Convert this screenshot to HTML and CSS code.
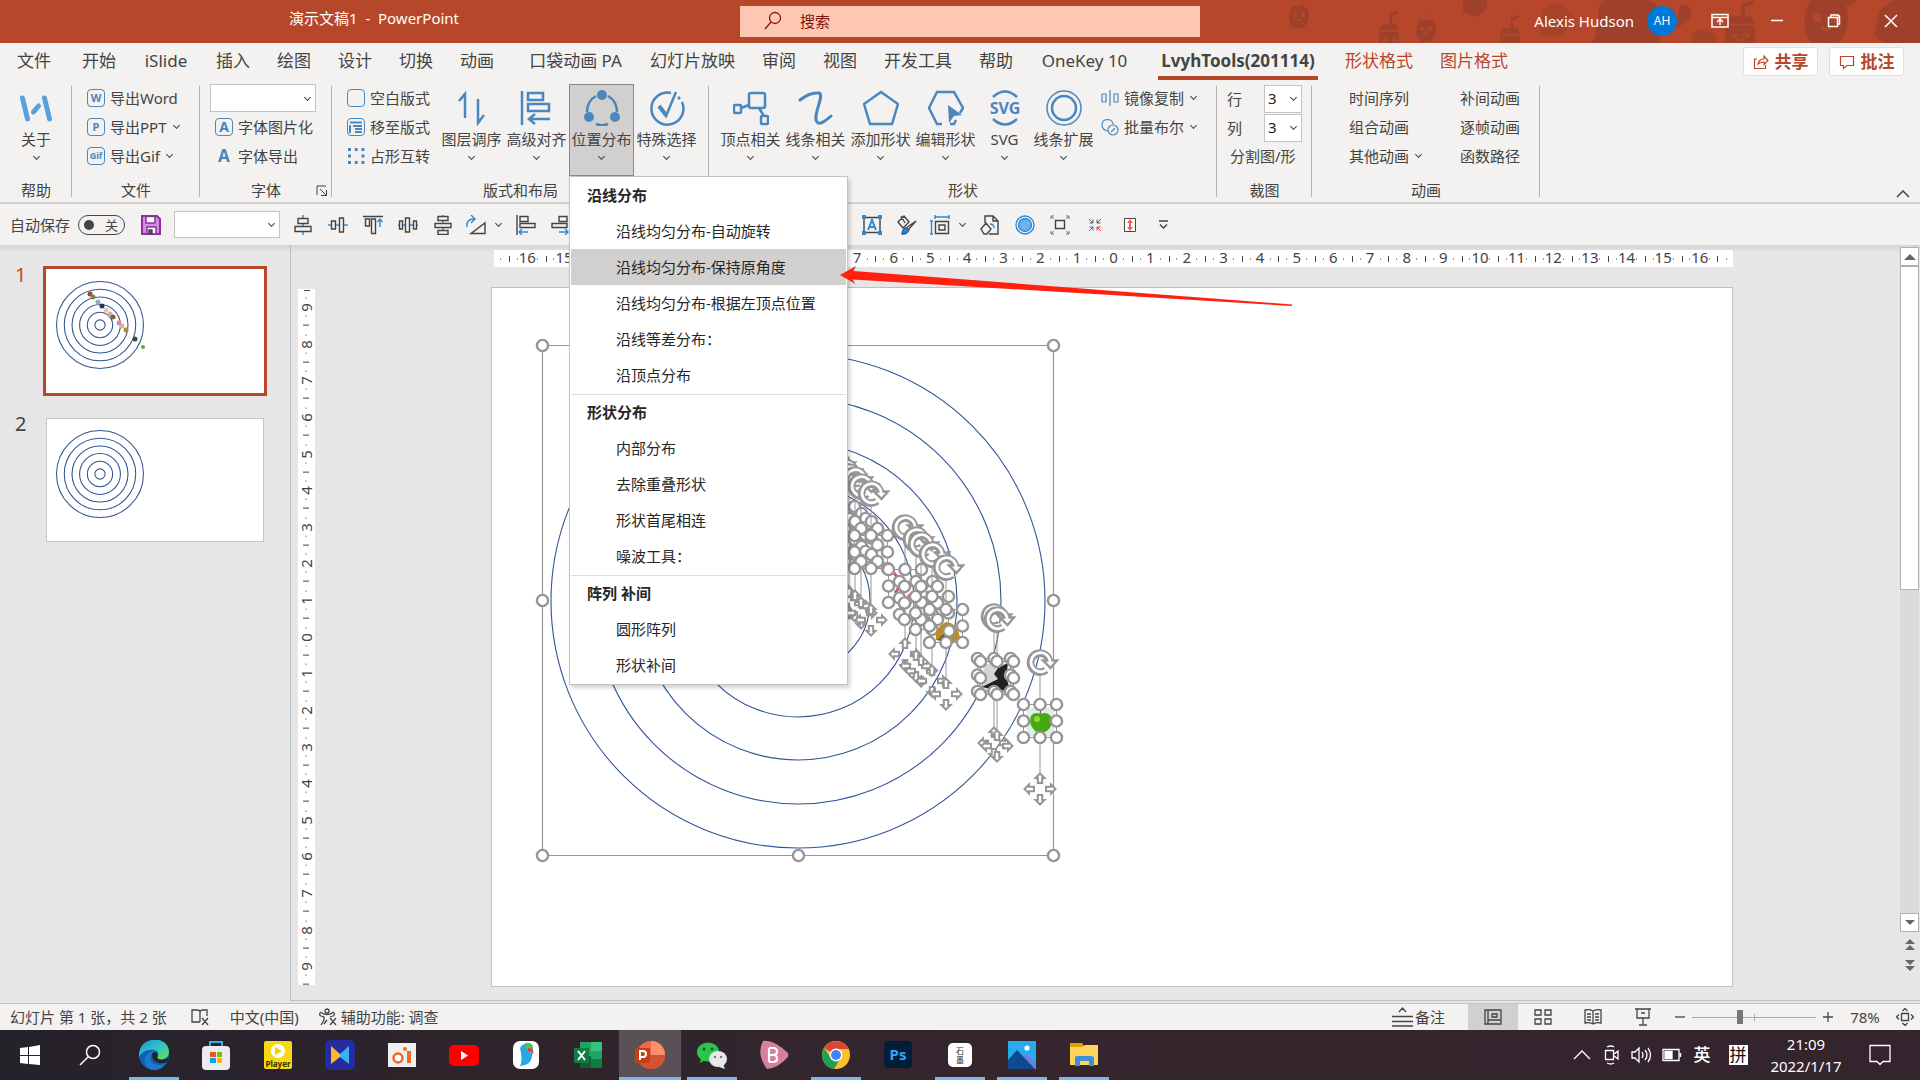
FILE: index.html
```html
<!DOCTYPE html>
<html lang="zh-CN">
<head>
<meta charset="utf-8">
<title>演示文稿1 - PowerPoint</title>
<link rel="stylesheet" href="styles.css">
</head>
<body>
<svg class="defs" aria-hidden="true">
  <defs>
    <symbol id="rings" viewBox="0 0 500 500"><g fill="none"><circle cx="250" cy="250" r="247"/><circle cx="250" cy="250" r="203"/><circle cx="250" cy="250" r="159"/><circle cx="250" cy="250" r="116"/><circle cx="250" cy="250" r="72"/><circle cx="250" cy="250" r="29"/></g></symbol>
    <g id="h"><circle r="5.6" fill="#fff" stroke="#969696" stroke-width="2.4"/></g>
    <g id="handles"><path d="M-16.5-16.5h33v33h-33z" fill="none" stroke="#969696"/><use href="#h" x="-16.5" y="-16.5"/><use href="#h" y="-16.5"/><use href="#h" x="16.5" y="-16.5"/><use href="#h" x="-16.5"/><use href="#h" x="16.5"/><use href="#h" x="-16.5" y="16.5"/><use href="#h" y="16.5"/><use href="#h" x="16.5" y="16.5"/></g>
    <g id="rot"><path d="M6 8A9.5 9.5 0 1 1 9.5 0" fill="none" stroke="#969696" stroke-width="7.6"/><path d="M3-1.500H17L10.500 6z" fill="#fff" stroke="#969696" stroke-width="2.400"/><path d="M6 8A9.500 9.500 0 1 1 10 1" fill="none" stroke="#fff" stroke-width="2.800"/></g>
    <path id="arw" d="M0-15.500L4.500-11H2.200V-6H-2.200V-11H-4.500z"/>
    <g id="move" fill="#fff" stroke="#969696" stroke-width="2"><use href="#arw"/><use href="#arw" transform="rotate(90)"/><use href="#arw" transform="rotate(180)"/><use href="#arw" transform="rotate(270)"/></g>
    <g id="sel"><path d="M0-46V-16M0 16V54" stroke="#969696"/><use href="#move" y="68"/><use href="#rot" y="-59"/><use href="#handles"/></g>
    <g id="fruit"><path d="M-9-5Q-8-13 0-11Q8-13 10-4Q10 8 3 11H-5Q-12 6-9-5z"/><circle cx="-4" cy="-2" r="2" fill="#b4472a"/><circle cx="4" cy="-2" r="2" fill="#b4472a"/><path d="M-2 2q2 3 4 0M0-11q0-7 4-9" fill="none" stroke="#b4472a" stroke-width="1.500"/></g>
    <g id="juice"><path d="M-10-8L-6-14H7L10-8V14H-10z"/><path d="M2-14V-23L9-26" fill="none" stroke="#98402b" stroke-width="2.500"/><path d="M-10-7H10" stroke="#b4472a" stroke-width="1.500"/><circle cx="-4" cy="2" r="2" fill="#b4472a"/><circle cx="5" cy="2" r="2" fill="#b4472a"/><path d="M-2 5q2 3 4 0" fill="none" stroke="#b4472a" stroke-width="1.500"/></g>
  </defs>
</svg>

<header class="titlebar">
  <svg class="doodles" viewBox="0 0 640 43" fill="#9f412a" aria-hidden="true"><use href="#fruit" x="19" y="17"/><path d="M19 8q3-8 5-2"/><use href="#juice" x="109" y="38"/><use href="#fruit" x="146" y="31"/><path d="M183-2h24v10l-10 9-14-5z"/><use href="#juice" x="230" y="42"/><path d="M264 9q10-10 24 0q8 5 2 14q-4 14-22 14q-12-4-8-14z" opacity=".7"/><path d="M318 10q2-14 30-12q38 0 32 22q-6 4 2 24h-70q8-20 6-34z"/><path d="M400 5q14-2 10 14l-14 10z"/><path d="M413 33q12-8 20 0q8 10-2 12h-22z" opacity=".8"/><use href="#juice" transform="translate(460 33) scale(1.500 1.200)"/><use href="#fruit" transform="translate(546 22) scale(2.200)"/><path d="M552 2q6-10 28-6q-8 14-28 10z"/><path d="M600 10l14-10h30v43h-40l-10-8z"/></svg>
  <div class="doc">演示文稿1&nbsp; -&nbsp; PowerPoint</div>
  <label class="search"><svg width="20" height="20" viewBox="0 0 20 20" fill="none" stroke="#8b1a10" stroke-width="1.3"><circle cx="12" cy="7" r="5.500"/><path d="M8 11L2 18"/></svg><input type="text" placeholder="搜索" aria-label="搜索"></label>
  <div class="account">
    <span class="user">Alexis Hudson</span><span class="avatar">AH</span>
    <button class="win" aria-label="功能区显示选项"><svg width="18" height="18" viewBox="0 0 18 18"><path d="M1 2.500h16v12.500H1zM1 5.500h16M9 13V7.500M6 10l3-3 3 3"/></svg></button>
    <button class="win" aria-label="最小化"><svg width="18" height="18" viewBox="0 0 18 18"><path d="M3 8.500h12"/></svg></button>
    <button class="win" aria-label="还原"><svg width="18" height="18" viewBox="0 0 18 18"><path d="M3.500 5.500h9v9h-9zM6 5V3h6q2.500 0 2.500 2.500V12h-2"/></svg></button>
    <button class="win" aria-label="关闭"><svg width="18" height="18" viewBox="0 0 18 18"><path d="M3 3l12 12M15 3L3 15"/></svg></button>
  </div>
</header>

<nav class="tabs">
  <button class="tab file">文件</button><button class="tab">开始</button><button class="tab latin">iSlide</button><button class="tab">插入</button><button class="tab">绘图</button><button class="tab">设计</button><button class="tab">切换</button><button class="tab">动画</button><button class="tab wide">口袋动画 PA</button><button class="tab">幻灯片放映</button><button class="tab">审阅</button><button class="tab">视图</button><button class="tab">开发工具</button><button class="tab">帮助</button><button class="tab onekey">OneKey 10</button><button class="tab on"><span>LvyhTools(201114)</span></button><button class="tab ctx">形状格式</button><button class="tab ctx">图片格式</button>
  <div class="share">
    <button><svg width="16" height="16" viewBox="0 0 16 16"><path d="M4 5H1.500v9.500h11V11M5 10q1-5 6-5V2l4 4.500-4 4V8Q7 8 5 10z"/></svg>共享</button>
    <button><svg width="16" height="16" viewBox="0 0 16 16"><path d="M1.500 2.500h13v9H8l-3.500 3v-3h-3z"/></svg>批注</button>
  </div>
</nav>

<section class="ribbon">
  <div class="group g-help">
    <div class="body"><button class="big"><svg width="36" height="36" viewBox="0 0 36 36" fill="none" stroke="#5aa0dc" stroke-width="5" stroke-linecap="round"><path d="M4.500 8l5 21M26.500 8l5 21M15.500 22l5-6"/></svg>关于<i class="chev"></i></button></div>
    <h2>帮助</h2>
  </div>
  <div class="group g-file">
    <div class="body"><div class="col">
      <button class="small"><span class="badge">W</span>导出Word</button>
      <button class="small"><span class="badge">P</span>导出PPT<i class="chev"></i></button>
      <button class="small"><span class="badge thin">Gif</span>导出Gif<i class="chev"></i></button>
    </div></div>
    <h2>文件</h2>
  </div>
  <div class="group g-font">
    <div class="body"><div class="col">
      <div class="combo font"><select aria-label="字体"><option></option></select><i class="chev"></i></div>
      <button class="small in"><span class="badge a">A</span>字体图片化</button>
      <button class="small in"><span class="badge a bare">A</span>字体导出</button>
    </div></div>
    <h2>字体</h2>
    <svg class="launch" width="12" height="12" viewBox="0 0 12 12"><path d="M1 10V1h9M4 4l6 6M10.500 5v5.500H5"/></svg>
  </div>
  <div class="group g-layout">
    <div class="body"><div class="col">
      <button class="small"><span class="badge"></span>空白版式</button>
      <button class="small"><span class="badge"><svg width="14" height="14" viewBox="0 0 14 14" stroke="#4a87c0" stroke-width="2"><path d="M1 2.500h12M1 5v8M4 6h9M6 9h7M6 12h7" fill="none"/></svg></span>移至版式</button>
      <button class="small"><svg class="dots" width="18" height="18" viewBox="0 0 18 18" fill="none" stroke="#4a87c0" stroke-width="3" stroke-dasharray="3 3.700"><path d="M1 2.500h17M1 9h3M14.500 9h3M1 15.500h17"/></svg>占形互转</button>
    </div>
    <div class="bigs">
      <button class="big"><svg width="36" height="36" viewBox="0 0 36 36" class="ic"><path d="M11 28V4L5 11M24 9v24l6-8"/></svg>图层调序<i class="chev"></i></button>
      <button class="big"><svg width="36" height="36" viewBox="0 0 36 36" class="ic"><path d="M3 1v34M9 3h15v7H9zM9 14h21v7H9zM31 29H10M16 24l-6 5 6 5"/></svg>高级对齐<i class="chev"></i></button>
      <button class="big active"><svg width="36" height="36" viewBox="0 0 36 36" class="ic"><path d="M12 6Q3 11 3 22M24 6q9 5 9 16M12 34q6 2.500 12 0"/><g fill="#4a87c0" stroke="none"><circle cx="18" cy="5" r="5"/><circle cx="5" cy="27" r="5"/><circle cx="31" cy="27" r="5"/></g></svg>位置分布<i class="chev"></i></button>
      <button class="big"><svg width="36" height="36" viewBox="0 0 36 36" class="ic"><path d="M22 3A16 16 0 1 0 33 12M31 9l-2-2M11 17l6 9L27 2" stroke-width="2.500"/><path d="M10 16l7 9" stroke-width="4"/></svg>特殊选择<i class="chev"></i></button>
    </div></div>
    <h2>版式和布局</h2>
  </div>
  <div class="group g-shape">
    <div class="body"><div class="bigs">
      <button class="big"><svg width="36" height="36" viewBox="0 0 36 36" class="ic"><rect x="16" y="3" width="16" height="15" rx="2"/><rect x="1" y="15" width="7" height="8" rx="1"/><rect x="28" y="26" width="7" height="8" rx="1"/><path d="M8 18l8-3M26 18l5 8"/></svg>顶点相关<i class="chev"></i></button>
      <button class="big"><svg width="36" height="36" viewBox="0 0 36 36" class="ic"><path d="M2 10Q12 2 21 3c6 2-7 23-2 29q3 4 14-6" stroke-width="3" stroke-linecap="round"/></svg>线条相关<i class="chev"></i></button>
      <button class="big"><svg width="36" height="36" viewBox="0 0 36 36" class="ic"><path d="M18 2l17 12-6 20H7L1 14z"/></svg>添加形状<i class="chev"></i></button>
      <button class="big"><svg width="36" height="36" viewBox="0 0 36 36" class="ic"><path d="M14 34H9L1 18 9 2h17l9 16-3 5M28 30l-2 4h-4"/><path d="M20 15l14 10-8 1-5 7z" fill="#4a87c0" stroke="none"/></svg>编辑形状<i class="chev"></i></button>
      <button class="big narrow"><svg width="36" height="36" viewBox="0 0 36 36" class="ic"><path d="M6 7q12-11 24 0M6 29q12 11 24 0"/><text x="18" y="24" text-anchor="middle" fill="#4a87c0" stroke="none">SVG</text></svg>SVG<i class="chev"></i></button>
      <button class="big"><svg width="38" height="36" viewBox="0 0 38 36" class="ic"><circle cx="19" cy="18" r="17" stroke-width="1.500"/><circle cx="19" cy="18" r="12"/></svg>线条扩展<i class="chev"></i></button>
    </div>
    <div class="col">
      <button class="small"><svg width="18" height="18" viewBox="0 0 18 18" class="ic s"><path d="M1 5h4v8H1zM13 5h4v8h-4zM9 1v16"/></svg>镜像复制<i class="chev"></i></button>
      <button class="small"><svg width="18" height="18" viewBox="0 0 18 18" class="ic s"><path d="M7 13q-6-1-6-6t5-5.500q6 0 6 5"/><circle cx="12" cy="12" r="5"/><path d="M10 14l4-4"/></svg>批量布尔<i class="chev"></i></button>
    </div></div>
    <h2>形状</h2>
  </div>
  <div class="group g-crop">
    <div class="body"><div class="col">
      <label class="field">行<span class="combo num"><select><option>3</option></select><i class="chev"></i></span></label>
      <label class="field">列<span class="combo num"><select><option>3</option></select><i class="chev"></i></span></label>
      <button class="small">分割图/形</button>
    </div></div>
    <h2>裁图</h2>
  </div>
  <div class="group g-anim">
    <div class="body">
      <div class="col"><button class="small">时间序列</button><button class="small">组合动画</button><button class="small">其他动画<i class="chev"></i></button></div>
      <div class="col"><button class="small">补间动画</button><button class="small">逐帧动画</button><button class="small">函数路径</button></div>
    </div>
    <h2>动画</h2>
  </div>
  <button class="collapse" aria-label="折叠功能区"><svg width="14" height="8" viewBox="0 0 14 8"><path d="M1 7l6-6 6 6"/></svg></button>

  <div class="menu" role="menu">
    <h3>沿线分布</h3>
    <button role="menuitem">沿线均匀分布-自动旋转</button>
    <button role="menuitem" class="hover">沿线均匀分布-保持原角度</button>
    <button role="menuitem">沿线均匀分布-根据左顶点位置</button>
    <button role="menuitem">沿线等差分布：</button>
    <button role="menuitem">沿顶点分布</button>
    <hr>
    <h3>形状分布</h3>
    <button role="menuitem">内部分布</button>
    <button role="menuitem">去除重叠形状</button>
    <button role="menuitem">形状首尾相连</button>
    <button role="menuitem">噪波工具：</button>
    <hr>
    <h3>阵列 补间</h3>
    <button role="menuitem">圆形阵列</button>
    <button role="menuitem">形状补间</button>
  </div>
</section>

<section class="qat">
  <label class="autosave">自动保存<input type="checkbox" role="switch"><span class="switch">关</span></label>
  <button class="q save" aria-label="保存"><svg width="20" height="20" viewBox="0 0 20 20"><path d="M1 1h15l3 3v15H1z" fill="#d58fe0" stroke="#8e2fa0" stroke-width="2"/><path d="M5 1.500h9V8H5zM6 12h9v7H6z" fill="#fff" stroke="#8e2fa0" stroke-width="1.500"/><path d="M8 15v4h3v-4z" fill="#8e2fa0"/></svg></button>
  <div class="combo style"><select aria-label="样式"><option></option></select><i class="chev"></i></div>
  <button class="q"><svg viewBox="0 0 20 20"><path class="b" d="M10 0v20"/><path class="w" d="M5 3.500h10v5H5zM2 11.500h16v5H2z"/></svg></button>
  <button class="q"><svg viewBox="0 0 20 20"><path class="b" d="M0 10h20"/><path class="w" d="M3.500 6h4v8h-4zM11.500 3h4v14h-4z"/></svg></button>
  <button class="q"><svg viewBox="0 0 20 20"><path d="M0 1.500h20M2.500 4h4v7h-4zM8.500 4h4v14.500h-4z"/><path class="b" d="M17 12V4M14.500 7L17 4l2.500 3"/></svg></button>
  <button class="q"><svg viewBox="0 0 20 20"><path class="b" d="M0 10h20"/><path class="w" d="M1.500 6h3v8h-3zM7.500 3h4v14h-4zM15.500 6h3v8h-3z"/></svg></button>
  <button class="q"><svg viewBox="0 0 20 20"><path class="b" d="M10 0v20"/><path class="w" d="M5 1.500h10v4H5zM2 8.500h16v4H2zM5 15.500h10v4H5z"/></svg></button>
  <button class="q drop"><svg viewBox="0 0 20 20"><path d="M5 18.500h14V8z"/><path class="b" d="M1 12Q0 4 8 4M5 0l4 4-4 4"/></svg><i class="chev"></i></button>
  <button class="q"><svg viewBox="0 0 20 20"><path d="M1 0v20M4 1.500h8v5H4zM4 8.500h15v4H4z"/><path class="b" d="M12 17H3M6 14l-3 3 3 3"/></svg></button>
  <button class="q"><svg viewBox="0 0 20 20"><path d="M19 0v20M8 1.500h8v5H8zM1 8.500h15v4H1z"/><path class="b" d="M8 17h9M14 14l3 3-3 3"/></svg></button>
  <div class="q-rest">
    <button class="q"><svg viewBox="0 0 20 20"><path d="M2 2.500h16v15H2z"/><path class="b" d="M6 15l4-10 4 10M7.500 12h5" stroke-width="2"/><path fill="#2b88d8" stroke="none" d="M0 0h4v4H0zM16 0h4v4h-4zM0 16h4v4H0zM16 16h4v4h-4z"/></svg></button>
    <button class="q"><svg viewBox="0 0 20 20"><path d="M1 7l6-6 5 6-6 6zM4 1l4 7M19 6l-8 9-2-2z"/><path d="M5 19q4 1 7-4l-3-2q-3 0-4 6z" fill="#2b88d8" stroke="#1f5f99"/></svg></button>
    <button class="q drop"><svg viewBox="0 0 20 20"><path class="b" d="M5 2h14M5 0v4M19 0v4M1.500 6v13M0 6h3M0 19h3"/><path d="M5.500 6.500h13v12h-13zM9 10h6v5H9z"/></svg><i class="chev"></i></button>
    <button class="q"><svg viewBox="0 0 20 20"><path d="M5 8V1h8l5 5v13H9M13 1v5h5M1 14l5-6 5 6-4 5H4z"/><path class="b" d="M10 9q4 0 4 4"/></svg></button>
    <button class="q"><svg viewBox="0 0 20 20"><circle cx="10" cy="10" r="9" fill="#fff" stroke="#2b88d8"/><circle cx="10" cy="10" r="6.500" fill="#6fb2e8" stroke="#2b88d8"/></svg></button>
    <button class="q"><svg viewBox="0 0 20 20"><path d="M5.500 5.500h9v8h-9z"/><path d="M1 4V1h3M1 1l3 3M16 1h3v3M19 1l-3 3M1 16v3h3M1 19l3-3M16 19h3v-3M19 19l-3-3" stroke="#777" stroke-width="1"/></svg></button>
    <button class="q"><svg viewBox="0 0 20 20" stroke-width="1"><path d="M4 4l4 4M8 4.500V8H4.500M16 4l-4 4M12 4.500V8h3.500" stroke="#555" stroke-width="1"/><path d="M4 16l4-4M8 15.500V12H4.500" stroke="#36c" stroke-width="1"/><path d="M16 16l-4-4M12 15.500V12h3.500" stroke="#d33" stroke-width="1"/></svg></button>
    <button class="q"><svg viewBox="0 0 20 20"><path d="M4.500 3.500h11v13h-11z" fill="#fff" stroke-width="1"/><path d="M10 4l3 4h-2v4h2l-3 4-3-4h2V8H7z" fill="#f4604c" stroke="none"/></svg></button>
    <button class="q"><svg viewBox="0 0 20 20"><path d="M4 6h9M5 9.500l3.500 3.500L12 9.500"/></svg></button>
  </div>
</section>

<main class="work">
  <aside class="thumbs">
    <div class="thumb sel"><span>1</span><div class="frame"><svg viewBox="0 0 218 124"><use href="#rings" x="10" y="12" width="88" height="88" stroke="#2f5597" stroke-width="6"/>
      <g><circle cx="44" cy="25" r="2.500" fill="#a3432c"/><circle cx="47" cy="28" r="2.500" fill="#6f8a4b"/><circle cx="52" cy="33" r="2.500" fill="#8db0bd"/><circle cx="56" cy="37" r="2.500" fill="#27324f"/><circle cx="60" cy="41" r="2.500" fill="#e9c5bb"/><circle cx="64" cy="45" r="2.500" fill="#d6b58d"/><circle cx="67" cy="48" r="2.500" fill="#7c6040"/><circle cx="73" cy="54" r="2.500" fill="#e77fb0"/><circle cx="76" cy="57" r="2.500" fill="#c9b5ac"/><circle cx="80" cy="61" r="2.500" fill="#b68a2a"/><circle cx="89" cy="70" r="2.500" fill="#444"/><circle cx="97" cy="78" r="2" fill="#4fb52c"/></g></svg></div></div>
    <div class="thumb"><span>2</span><div class="frame"><svg viewBox="0 0 218 124"><use href="#rings" x="10" y="12" width="88" height="88" stroke="#2f5597" stroke-width="6"/></svg></div></div>
  </aside>
  <div class="editor">
    <div class="ruler-v"><span>9</span><span>8</span><span>7</span><span>6</span><span>5</span><span>4</span><span>3</span><span>2</span><span>1</span><span>0</span><span>1</span><span>2</span><span>3</span><span>4</span><span>5</span><span>6</span><span>7</span><span>8</span><span>9</span></div>
    <div class="stage">
      <div class="ruler-h"><span>16</span><span>15</span><span>14</span><span>13</span><span>12</span><span>11</span><span>10</span><span>9</span><span>8</span><span>7</span><span>6</span><span>5</span><span>4</span><span>3</span><span>2</span><span>1</span><span>0</span><span>1</span><span>2</span><span>3</span><span>4</span><span>5</span><span>6</span><span>7</span><span>8</span><span>9</span><span>10</span><span>11</span><span>12</span><span>13</span><span>14</span><span>15</span><span>16</span></div>
      <div class="slide">
        <svg viewBox="492 288 1240 698">
          <use href="#rings" x="548" y="351" width="500" height="500" stroke="#2f5597" stroke-width="1.100"/>
          <path d="M542.500 345.500h511v510h-511z" fill="none" stroke="#969696" stroke-width="1.200"/>
          <g><use href="#h" x="542.500" y="345.500"/><use href="#h" x="1053.500" y="345.500"/><use href="#h" x="542.500" y="600.500"/><use href="#h" x="1053.500" y="600.500"/><use href="#h" x="542.500" y="855.500"/><use href="#h" x="798.500" y="855.500"/><use href="#h" x="1053.500" y="855.500"/></g>
          <use href="#sel" x="838" y="523"/><use href="#sel" x="845" y="530"/><use href="#sel" x="849" y="535"/><use href="#sel" x="855" y="538"/><use href="#sel" x="861" y="545"/><use href="#sel" x="871" y="552"/>
          <path d="M894 573l8 10-7 10M908 596l8-4M926 592l8 4" stroke="#e0468c" stroke-width="3" fill="none"/>
          <use href="#sel" x="905" y="586"/><use href="#sel" x="916" y="598"/><use href="#sel" x="921" y="603"/><use href="#sel" x="932" y="613"/>
          <path d="M936 640q-2-12 10-18 12 2 14 16l-8 6z" fill="#c08a22"/><path d="M938 640l8-8 4 10z" fill="#3c2c12"/>
          <use href="#sel" x="946" y="626"/><use href="#h" x="949" y="631"/>
          <path d="M984 664h24v27h-26z" fill="#d6d6d6"/><path d="M998 668l10-5-2 14 4 12-10 2-18-4 16-8-4-5z" fill="#222"/>
          <use href="#sel" x="994" y="675"/><use href="#sel" x="997" y="678"/>
          <path d="M1027 708h27v28h-27z" fill="#dcefe9"/><path d="M1031 716q3-5 9-2 8-3 11 3 3 8-4 14-7 3-12 0-7-7-4-15z" fill="#48a814"/><circle cx="1037" cy="719" r="3" fill="#8ddc3c"/><path d="M1040 714l1-5" stroke="#5a3a1c"/>
          <use href="#sel" x="1040" y="721"/>
        </svg>
      </div>
    </div>
    <div class="scroll">
      <button aria-label="向上"><svg width="12" height="8" viewBox="0 0 12 8"><path d="M0 7l6-6 6 6z"/></svg></button>
      <div class="track"><div class="bar"></div></div>
      <button aria-label="向下"><svg width="12" height="8" viewBox="0 0 12 8"><path d="M1 1l5 5 5-5z"/></svg></button>
      <button class="flat" aria-label="上一张"><svg width="12" height="12" viewBox="0 0 12 12"><path d="M1 6l5-5 5 5zM1 12l5-5 5 5z"/></svg></button>
      <button class="flat" aria-label="下一张"><svg width="12" height="12" viewBox="0 0 12 12"><path d="M1 0l5 5 5-5zM1 6l5 5 5-5z"/></svg></button>
    </div>
  </div>
</main>

<footer class="status">
  <span>幻灯片 第 1 张，共 2 张</span>
  <button class="lang"><svg width="20" height="18" viewBox="0 0 20 18"><path d="M10 14H2V2h5q3 0 3 2 0-2 3-2h4v6M10 4v10M12 10l6 7M18 10l-6 7"/></svg></button>
  <button>中文(中国)</button>
  <button class="acc"><svg width="19" height="18" viewBox="0 0 19 18"><circle cx="8" cy="3" r="2"/><path d="M1 5q-1 2 1 3l3 1v3l-3 5M15 5q1 2-1 3l-3 1M1 4q7 5 14 0M5 16l3-4M11 10l6 7M17 10l-6 7"/></svg>辅助功能: 调查</button>
  <div class="views">
    <button class="notes"><svg width="21" height="20" viewBox="0 0 21 20"><path d="M0 9.500h21M0 14.500h21M0 19h21M7 5l3.500-4L14 5"/></svg>备注</button>
    <button class="view on"><svg width="18" height="16" viewBox="0 0 18 16"><path d="M1 1h16v14H1zM4 1v14M4 11h13M8 5h5v3H8z"/></svg></button>
    <button class="view"><svg width="18" height="16" viewBox="0 0 18 16"><path d="M1 1h6v5H1zM11 1h6v5h-6zM1 10h6v5H1zM11 10h6v5h-6z"/></svg></button>
    <button class="view"><svg width="18" height="16" viewBox="0 0 18 16"><path d="M9 2Q5 0 1 1v13q4-1 8 1 4-2 8-1V1Q13 0 9 2v13M3 5h4M3 8h4M3 11h4M11 5h4M11 8h4M11 11h4"/></svg></button>
    <button class="view"><svg width="18" height="18" viewBox="0 0 18 18"><path d="M1 1h16M3 1v9h12V1M7 5h4M9 10v6M5 17h8"/></svg></button>
    <button class="zoom" aria-label="缩小"><svg width="12" height="12" viewBox="0 0 12 12"><path d="M1 6h10"/></svg></button>
    <input type="range" min="0" max="100" value="38" aria-label="显示比例">
    <button class="zoom" aria-label="放大"><svg width="12" height="12" viewBox="0 0 12 12"><path d="M1 6h10M6 1v10"/></svg></button>
    <button class="pct">78%</button>
    <button class="fit" aria-label="适应窗口"><svg width="18" height="18" viewBox="0 0 18 18"><path d="M5.500 5.500h7v7h-7zM6.500 3L9 .5 11.500 3M6.500 15L9 17.500 11.500 15M3 6.500L.5 9 3 11.500M15 6.500L17.500 9 15 11.500"/></svg></button>
  </div>
</footer>

<nav class="taskbar">
  <button class="app sys"><svg width="20" height="20" viewBox="0 0 20 20" fill="#fff"><path d="M0 3l8-1v8H0zM9 2l11-2v10H9zM0 11h8v8l-8-1zM9 11h11v9L9 19z"/></svg></button>
  <button class="app sys find"><svg width="22" height="22" viewBox="0 0 22 22" fill="none" stroke="#fff" stroke-width="1.500"><circle cx="14" cy="8" r="6.500"/><path d="M9 13l-8 8"/></svg></button>
  <button class="app run"><svg viewBox="0 0 30 30"><defs><linearGradient id="e1" x2="1" y2="1"><stop stop-color="#1d8fd8"/><stop offset=".5" stop-color="#2fc3c8"/><stop offset="1" stop-color="#6be04c"/></linearGradient></defs><circle cx="15" cy="15" r="15" fill="#0f5fae"/><path d="M0 15C0-5 30-5 30 12c0 7-9 9-12 6 4-6-2-9-7-8Q4 10 0 17z" fill="url(#e1)"/><path d="M12 15q-2 10 8 10 5 0 8-3-6 9-15 8Q4 27 6 18q2-6 9-7-2 2-3 4z" fill="#1b79cf"/><path d="M13 14q0 8 7 9 6 1 9-2v-3q-7 4-11 0 2-5-2-6z" fill="#26222a"/></svg></button>
  <button class="app"><svg viewBox="0 0 30 30"><path d="M9 8V2h12v6" fill="none" stroke="#35b1ea" stroke-width="2"/><rect x="1" y="6" width="28" height="24" rx="4" fill="#ececec"/><path d="M9 12h6v5H9z" fill="#f25022"/><path d="M16 12h5v5h-5z" fill="#7fba00"/><path d="M9 18h6v5H9z" fill="#00a4ef"/><path d="M16 18h5v5h-5z" fill="#ffb900"/></svg></button>
  <button class="app"><svg viewBox="0 0 30 30"><rect x="1" y="1" width="28" height="28" rx="2" fill="#f8d812"/><circle cx="15" cy="11" r="7" fill="#fff"/><path d="M12 7l7 4-7 4z" fill="#f8c800"/><text x="15" y="27" text-anchor="middle" font-size="8" font-weight="700" fill="#3a3000">Player</text></svg></button>
  <button class="app"><svg viewBox="0 0 30 30"><rect width="30" height="30" rx="5" fill="#262c9e"/><path d="M6 6l9 8v3l-9 7z" fill="#fbb62a"/><path d="M24 6l-9 8v3l9 7z" fill="#38b2f2"/></svg></button>
  <button class="app"><svg viewBox="0 0 30 30"><rect x="1" y="3" width="28" height="24" fill="#efefef"/><circle cx="11" cy="18" r="4.500" fill="#fff" stroke="#ec6a2c" stroke-width="2.500"/><circle cx="18" cy="9" r="2" fill="#ec6a2c"/><path d="M20 11h4v12h-4z" fill="#ec6a2c"/></svg></button>
  <button class="app"><svg viewBox="0 0 30 30"><rect y="5" width="30" height="21" rx="5" fill="#f00"/><path d="M12 11l7 4.500-7 4.500z" fill="#fff"/></svg></button>
  <button class="app"><svg viewBox="0 0 30 30"><rect x="2" y="1" width="26" height="28" rx="7" fill="#fff"/><path d="M9 8q3-5 8-4 0 7 4 9 1 12-12 13 3-6 0-18z" fill="#26a7e8"/><path d="M14 3q7-1 8 4v4l-7-2z" fill="#4cc35a"/><path d="M17 8q7 0 5 7-1-4-5-4z" fill="#e33b3b"/></svg></button>
  <button class="app"><svg viewBox="0 0 30 30"><path d="M7 2h22v26H7z" fill="#21a366"/><path d="M18 2h11v9H18z" fill="#33c481"/><path d="M7 16h11v12H7z" fill="#185c37"/><path d="M18 19h11v9H18z" fill="#107c41"/><rect x="1" y="8" width="15" height="15" rx="1" fill="#107c41"/><path d="M5 11l7 9M12 11l-7 9" stroke="#fff" stroke-width="2"/></svg></button>
  <button class="app run current"><svg viewBox="0 0 30 30"><circle cx="16" cy="15" r="14" fill="#ed6c47"/><path d="M16 1a14 14 0 0 1 14 14H16z" fill="#ff8f6b"/><path d="M2 15a14 14 0 0 0 28 0z" fill="#d35230"/><rect x="0" y="8" width="15" height="15" rx="1" fill="#c43e1c"/><path d="M5 20v-9h3q3 0 3 3t-3 3H5" fill="none" stroke="#fff" stroke-width="2"/></svg></button>
  <button class="app run"><svg viewBox="0 0 30 30"><ellipse cx="11" cy="12" rx="11" ry="9.500" fill="#2dc34f"/><path d="M4 18l-1 5 5-3z" fill="#2dc34f"/><circle cx="7" cy="9" r="1.500" fill="#145a26"/><circle cx="15" cy="9" r="1.500" fill="#145a26"/><ellipse cx="21" cy="19" rx="9" ry="8" fill="#e8e8e8"/><path d="M26 24l2 5-6-2z" fill="#e8e8e8"/><circle cx="18" cy="17" r="1.200" fill="#777"/><circle cx="24" cy="17" r="1.200" fill="#777"/></svg></button>
  <button class="app"><svg viewBox="0 0 30 30"><path d="M4 1q10-2 25 12 1 3-1 5-9 10-20 11Q-3 14 4 1z" fill="#d5809c"/><path d="M10 8v14M10 8h4q4 0 4 3.500t-4 3.500h-4 4q4 0 4 3.500T14 22h-4" fill="none" stroke="#fff" stroke-width="2.200"/></svg></button>
  <button class="app run"><svg viewBox="0 0 30 30"><circle cx="15" cy="15" r="14" fill="#fbc02d"/><path d="M15 15L3 8A14 14 0 0 1 27.500 9H15z" fill="#db4437"/><path d="M3 8a14 14 0 0 0 10 21l6-10-9-1z" fill="#1e9e57"/><circle cx="15" cy="15" r="6.500" fill="#fff"/><circle cx="15" cy="15" r="5" fill="#4285f4"/></svg></button>
  <button class="app"><svg viewBox="0 0 30 30"><rect x="1" y="1" width="28" height="27" rx="4" fill="#001e36"/><text x="15" y="20" text-anchor="middle" font-size="15" font-weight="700" fill="#31a8ff">Ps</text></svg></button>
  <button class="app run"><svg viewBox="0 0 30 30"><rect x="3" y="3" width="24" height="24" rx="5" fill="#fff"/><text x="15" y="14" text-anchor="middle" font-size="8" fill="#333">石</text><text x="15" y="23" text-anchor="middle" font-size="8" fill="#333">墨</text></svg></button>
  <button class="app run"><svg viewBox="0 0 30 30"><path d="M1 1h28v28H1z" fill="#29aaed"/><path d="M14 19l6-5 9 10v5H14z" fill="#6d7ee0"/><path d="M1 20l9-10 18 19H1z" fill="#0f4a8e"/><circle cx="20" cy="8" r="2.600" fill="#fff"/></svg></button>
  <button class="app run"><svg viewBox="0 0 30 30"><path d="M1 3h12l2 3v5H1z" fill="#e0a000"/><path d="M1 7h12l3-2h13v20H1z" fill="#ffd45c"/><path d="M6 26V18q0-2 2-2h14q3 0 3 2v8h-5v-5h-9v5z" fill="#3f8fd8"/></svg></button>
  <div class="tray">
    <button><svg width="18" height="10" viewBox="0 0 18 10"><path d="M1 9l8-8 8 8"/></svg></button>
    <button><svg width="16" height="20" viewBox="0 0 16 20"><path d="M1.500 5.500h8v9h-8zM10 9l4-3v8l-4-3M3 2q4-2 7 0M3 18q4 2 7 0"/></svg></button>
    <button><svg width="22" height="18" viewBox="0 0 22 18"><path d="M1 6h3l4-4v14l-4-4H1zM11 6q2 3 0 6M14 4q4 5 0 10M17 2q5 7 0 14"/></svg></button>
    <button><svg width="20" height="14" viewBox="0 0 20 14"><path d="M1 1.500h16v11H1zM18.500 5v4"/><path d="M3 3.500h7v7H3z" fill="#fff"/></svg></button>
    <button class="ime">英</button>
    <button class="pin"><span>拼</span></button>
    <button class="clock"><span>21:09</span><span>2022/1/17</span></button>
    <button class="note"><svg width="22" height="22" viewBox="0 0 22 22"><path d="M1 1.500h20v16h-7l-3 3-3-3H1z"/></svg></button>
  </div>
</nav>

<svg class="pointer" width="454" height="42" viewBox="839 265 454 42" aria-hidden="true"><path d="M840 275l16-9-2.500 5L1292 304.500v1.500L852.500 279.500l3 4.500z" fill="#ff2010"/></svg>
</body>
</html>
```
FILE: styles.css
```css
* { box-sizing: border-box; }
body {
  margin: 0;
  min-height: 100vh;
  display: flex;
  flex-direction: column;
  position: relative;
  overflow-x: hidden;
  background: #e6e6e6;
  color: #444;
  font: 15px/20px "Noto Sans", "Noto Sans CJK SC", sans-serif;
}
button, select, input { font: inherit; color: inherit; }
button {
  margin: 0;
  padding: 0;
  border: 0;
  background: none;
  white-space: nowrap;
}
h2, h3 { margin: 0; font-size: 15px; font-weight: 400; }
svg { display: block; flex: none; }
.defs { position: absolute; width: 0; height: 0; }

/* title bar */
.titlebar {
  position: relative;
  display: grid;
  grid-template-columns: 740fr 460fr 720fr;
  height: 43px;
  background: #b7472a;
  color: #fff;
}
.doodles { position: absolute; right: 0; top: 0; width: 640px; height: 43px; overflow: hidden; }
.doc { padding: 8px 0 0 289px; white-space: nowrap; }
.search {
  display: flex;
  align-items: center;
  height: 31px;
  margin-top: 6px;
  padding: 0 0 2px 23px;
  gap: 17px;
  background: #fdc7b2;
}
.search input { flex: 1; min-width: 0; border: 0; outline: 0; background: none; padding: 0; }
.search input::placeholder { color: #7d1610; opacity: 1; }
.account {
  position: relative;
  display: flex;
  justify-content: flex-end;
  align-items: center;
  height: 42px;
  padding-right: 1px;
}
.avatar {
  width: 30px;
  height: 30px;
  margin: 0 14px 0 13px;
  border-radius: 50%;
  background: #0078d7;
  font-size: 12px;
  line-height: 30px;
  text-align: center;
}
.win { width: 57px; display: flex; justify-content: center; }
.win svg { fill: none; stroke: #fff; stroke-width: 1.5; }

/* ribbon tabs */
.tabs {
  display: flex;
  height: 37px;
  padding-left: 4px;
  background: #f3f2f0;
  font-size: 17px;
}
.tab { padding: 0 14px 2px 13px; height: 37px; }
.tab.file { padding-right: 18px; }
.tab.latin { width: 73px; }
.tab.wide { width: 129px; padding-left: 20px; }
.tab.onekey { width: 118px; padding-right: 16px; }
.tab.on { width: 187px; padding-bottom: 0; font-weight: 700; }
.tab.on span {
  display: block;
  height: 36px;
  line-height: 34px;
  border-bottom: 4px solid #b7472a;
}
.tab.ctx { color: #b7472a; }
.share { display: flex; gap: 11px; margin-left: auto; padding: 4px 16px 0 0; }
.share button {
  display: flex;
  align-items: center;
  justify-content: center;
  gap: 6px;
  width: 75px;
  height: 29px;
  border: 1px solid #e1dfdd;
  border-radius: 3px;
  background: #fff;
  color: #b7472a;
  font-weight: 700;
}
.share svg { fill: none; stroke: #b7472a; stroke-width: 1.2; }

/* ribbon */
.ribbon {
  position: relative;
  display: flex;
  height: 124px;
  background: #f3f2f0;
  border-bottom: 2px solid #d2d0ce;
}
.group { position: relative; display: flex; flex-direction: column; flex: none; }
.group::after {
  content: "";
  position: absolute;
  right: 0;
  top: 6px;
  height: 111px;
  border-right: 1px solid #b5b3b1;
}
.group .body { display: flex; height: 96px; padding-top: 4px; }
.group h2 { margin-top: 4px; text-align: center; }
.g-help { width: 72px; }
.g-file { width: 128px; }
.g-font { width: 132px; }
.g-layout { width: 377px; }
.g-shape { width: 508px; }
.g-crop { width: 95px; }
.g-anim { width: 228px; }
.g-file .body, .g-layout .body { padding-left: 15px; }
.g-font .body, .g-crop .body { padding-left: 10px; }
.g-shape .body { padding-left: 9px; }
.g-anim .body { padding-left: 37px; }
.g-anim .col { flex: none; width: 111px; }
.g-anim .col + .col { width: 70px; }
.col { display: flex; flex-direction: column; }
.small { display: flex; align-items: center; gap: 5px; height: 29px; padding-bottom: 2px; }
.small.in { padding-left: 5px; }
.badge {
  display: flex;
  align-items: center;
  justify-content: center;
  width: 18px;
  height: 18px;
  border: 1px solid #4a87c0;
  border-radius: 4px;
  color: #4a87c0;
  font-size: 11px;
  font-weight: 700;
  line-height: 16px;
}
.badge.thin { font-size: 9px; }
.badge.a { font-size: 14px; }
.badge.bare { border: 0; font-size: 17px; }
.chev {
  display: block;
  flex: none;
  width: 5px;
  height: 5px;
  margin: 0 2px 2px;
  border: solid #444;
  border-width: 0 1px 1px 0;
  transform: rotate(45deg);
}
.combo {
  position: relative;
  display: flex;
  align-items: center;
  height: 28px;
  border: 1px solid #c6c4c2;
  background: #fff;
}
.combo select {
  width: 100%;
  height: 100%;
  padding: 0 3px 2px;
  border: 0;
  appearance: none;
  background: none;
  color: #222;
}
.combo .chev { position: absolute; right: 3px; pointer-events: none; }
.combo.font { width: 106px; margin-bottom: 1px; }
.combo.num { width: 38px; }
.field { display: flex; align-items: center; gap: 22px; height: 29px; line-height: 18px; }
.g-crop .small { padding-left: 3px; }
.bigs { display: flex; }
.g-layout .bigs { margin-left: 9px; }
.g-shape .col { margin-left: 5px; }
.big {
  display: flex;
  flex-direction: column;
  align-items: center;
  width: 65px;
  height: 92px;
  padding-top: 6px;
}
.g-help .big { width: 72px; }
.big.narrow { width: 53px; }
.big svg { margin-bottom: 3px; }
.big .chev { margin: 5px 0 0; }
.big.active { padding-top: 5px; border: 1px solid #8a8886; background: #d2d0ce; }
.ic { fill: none; stroke: #4a87c0; stroke-width: 2.5; }
.ic.s { stroke-width: 1.2; }
.ic text { font-size: 16px; font-weight: 700; }
.launch { position: absolute; right: 4px; bottom: 5px; fill: none; stroke: #444; }
.collapse { margin: 0 10px 4px auto; align-self: flex-end; }
.collapse svg { fill: none; stroke: #444; stroke-width: 1.5; }

/* drop-down menu */
.menu {
  position: absolute;
  z-index: 5;
  left: 569px;
  top: 96px;
  width: 279px;
  padding: 1px;
  border: 1px solid #c6c4c2;
  background: #fff;
  box-shadow: 2px 3px 4px rgba(0, 0, 0, .18);
  color: #262626;
}
.menu h3 { height: 35px; padding-left: 16px; font-weight: 700; line-height: 34px; }
.menu button { display: block; width: 100%; height: 36px; padding: 0 0 1px 45px; text-align: left; }
.menu .hover { background: #d2d0ce; }
.menu hr { height: 1px; margin: 1px 0 0; border: 0; background: #dedcda; }

/* quick access toolbar */
.qat {
  display: flex;
  align-items: center;
  height: 41px;
  padding-left: 10px;
  background: #f3f2f0;
}
.autosave { display: flex; align-items: center; gap: 8px; line-height: 18px; }
.autosave input { position: absolute; opacity: 0; }
.switch {
  display: flex;
  align-items: center;
  justify-content: space-between;
  width: 47px;
  height: 20px;
  padding: 0 6px 0 5px;
  border: 1px solid #444;
  border-radius: 10px;
  font-size: 13px;
}
.switch::before { content: ""; width: 10px; height: 10px; border-radius: 50%; background: #444; }
.q { display: flex; align-items: center; justify-content: center; width: 35px; height: 28px; }
.q svg { width: 20px; height: 20px; fill: none; stroke: #444; stroke-width: 1.4; }
.q .b { stroke: #2b88d8; }
.q .w { fill: #f3f2f0; }
.q.save { margin: 0 6px 0 8px; }
.combo.style { width: 106px; height: 27px; margin-right: 5px; }
.q.drop { width: 48px; gap: 8px; }
.q-rest { display: flex; margin-left: 276px; }

/* work area */
.work {
  flex: 1;
  display: flex;
  min-height: 758px;
  background: linear-gradient(#d4d4d4, #e6e6e6 8px);
  border-bottom: 1px solid #c6c4c2;
}
.thumbs { width: 291px; padding-top: 22px; border-right: 1px solid #c0c0c0; margin-bottom: 2px; }
.thumb { display: flex; gap: 18px; height: 149px; padding-left: 15px; font-size: 20px; }
.thumb span { width: 10px; line-height: 16px; }
.thumb .frame { width: 218px; height: 124px; margin: 2px 0 0 3px; background: #fff; outline: 1px solid #c6c6c6; outline-offset: -1px; }
.thumb.sel span { color: #d24726; }
.thumb.sel .frame { outline: 3px solid #b7472a; outline-offset: 0; }
.editor { flex: 1; display: flex; border-bottom: 1px solid #c0c0c0; margin-bottom: 2px; }
.ruler-v, .ruler-h { display: flex; background: #fff; font-size: 15px; line-height: 17px; }
.ruler-v span, .ruler-h span {
  flex: 1;
  display: flex;
  align-items: center;
  justify-content: center;
}
.ruler-v { flex-direction: column; width: 17px; height: 696px; margin: 44px 0 0 7px; background:
  linear-gradient(#444, #444) 50% 1px / 6px 1px no-repeat, #fff; }
.ruler-v span { writing-mode: vertical-rl; transform: rotate(180deg); background:
  linear-gradient(#444, #444) 50% 0 / 6px 1px no-repeat,
  linear-gradient(#999, #999) 50% 25% / 2px 1px no-repeat,
  linear-gradient(#999, #999) 50% 75% / 2px 1px no-repeat; }
.stage { flex: 1; padding: 5px 167px 0 176px; }
.ruler-h { height: 17px; margin-left: 3px; padding: 0 15px; background:
  linear-gradient(#444, #444) calc(100% - 15px) 50% / 1px 6px no-repeat,
  linear-gradient(#999, #999) 6px 50% / 1px 2px no-repeat,
  linear-gradient(#999, #999) calc(100% - 6px) 50% / 1px 2px no-repeat, #fff; }
.ruler-h span { padding-bottom: 2px; background:
  linear-gradient(#444, #444) 0 50% / 1px 6px no-repeat,
  linear-gradient(#999, #999) 22% 50% / 1px 2px no-repeat,
  linear-gradient(#999, #999) 78% 50% / 1px 2px no-repeat; }
.slide { margin-top: 20px; border: 1px solid #c0c0c0; background: #fff; }
.slide svg { width: 100%; }
.scroll { display: flex; flex-direction: column; width: 20px; padding: 2px 1px 24px 0; }
.scroll button {
  display: flex;
  align-items: center;
  justify-content: center;
  height: 19px;
  border: 1px solid #b0b0b0;
  background: #fff;
}
.scroll svg { fill: #666; }
.scroll .flat { height: 21px; margin-top: 1px; border: 0; background: none; }
.track { flex: 1; background: #dadada; }
.bar { height: 50%; border: 1px solid #b0b0b0; background: #fff; }

/* status bar */
.status {
  display: flex;
  align-items: center;
  height: 26px;
  padding-left: 10px;
  background: #f3f2f0;
  white-space: nowrap;
}
.status svg { fill: none; stroke: #444; stroke-width: 1.3; }
.status .lang { margin: 0 20px 0 23px; }
.acc { display: flex; align-items: center; gap: 3px; margin-left: 20px; }
.views { display: flex; align-items: center; margin-left: auto; padding-right: 6px; }
.notes { display: flex; align-items: center; gap: 2px; margin-right: 23px; }
.view { display: flex; align-items: center; justify-content: center; width: 50px; height: 26px; }
.view.on { background: #d2d0ce; }
.zoom { display: flex; justify-content: center; width: 24px; }
.status input {
  width: 124px;
  height: 16px;
  margin: 0;
  appearance: none;
  background: linear-gradient(#aaa, #aaa) 50% 50% / 100% 1px no-repeat, linear-gradient(#aaa, #aaa) 50% 50% / 1px 7px no-repeat;
}
.status input::-webkit-slider-thumb { appearance: none; width: 6px; height: 14px; background: #777; }
.pct { width: 34px; margin: 0 14px 0 8px; }

/* task bar */
.taskbar {
  display: flex;
  height: 50px;
  background: linear-gradient(90deg, #26222a, #35262e 50%, #33242d);
  color: #fff;
}
.app {
  position: relative;
  display: flex;
  align-items: center;
  justify-content: center;
  width: 62px;
}
.app.sys { width: 60px; }
.app.find { margin-right: 3px; }
.app:not(.sys) svg { width: 30px; height: 30px; }
.app.run::after {
  content: "";
  position: absolute;
  left: 6px;
  right: 6px;
  bottom: 0;
  height: 3px;
  background: #76b9ed;
}
.app.current { background: #5a5157; }
.app.current::after { left: 0; right: 0; }
.tray { display: flex; align-items: center; margin-left: auto; }
.tray button { display: flex; align-items: center; justify-content: center; width: 30px; }
.tray svg { fill: none; stroke: #fff; stroke-width: 1.3; }
.tray .ime { font-size: 17px; font-weight: 500; }
.tray .pin { width: 42px; }
.pin span { width: 19px; height: 20px; background: #fff; color: #111; font-size: 17px; line-height: 20px; }
.tray .clock { flex-direction: column; width: 94px; font-size: 15px; line-height: 22px; }
.tray .note { width: 54px; margin-right: 13px; }

/* red annotation arrow */
.pointer { position: absolute; z-index: 6; left: 839px; top: 265px; }
```
